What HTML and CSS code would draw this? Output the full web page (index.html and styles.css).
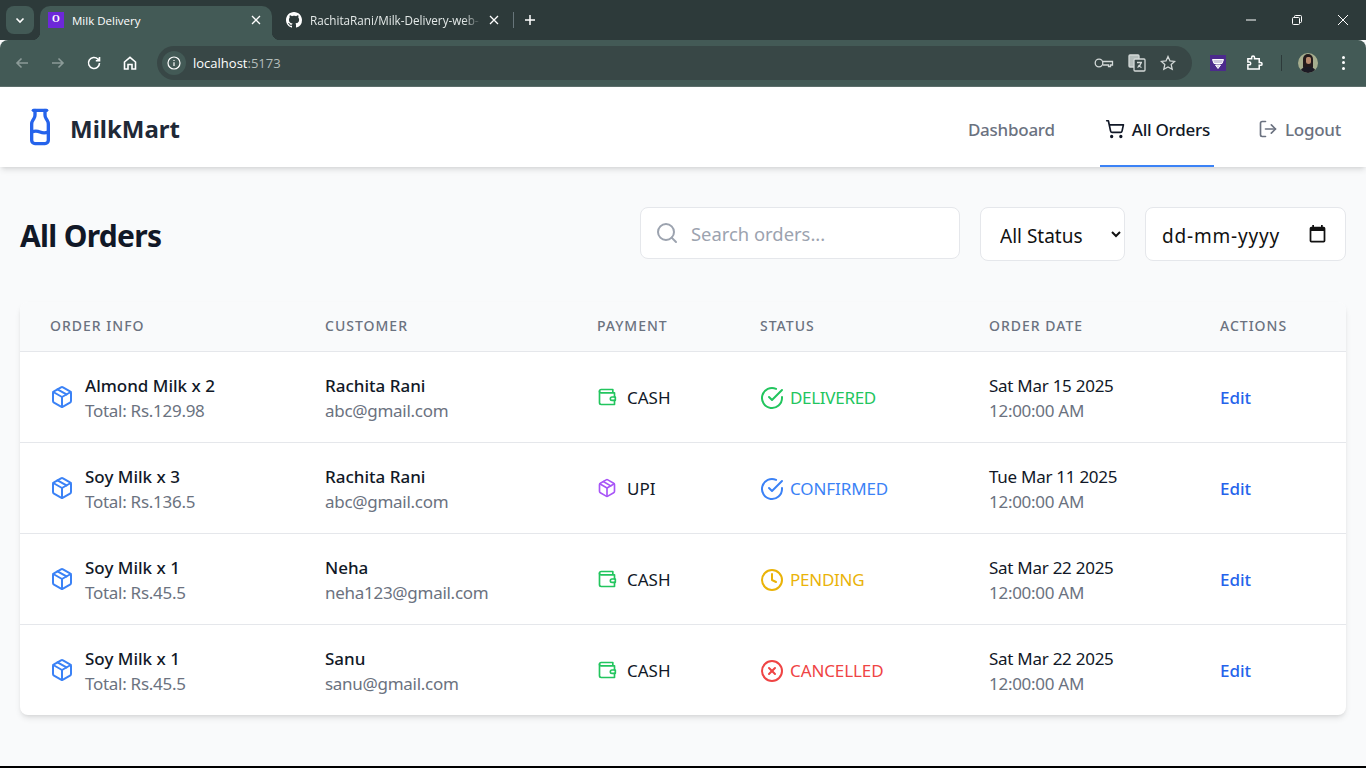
FILE: index.html
```html
<!DOCTYPE html>
<html lang="en">
<head>
  <meta charset="UTF-8" />
  <meta name="viewport" content="width=device-width, initial-scale=1.0" />
  <title>Milk Delivery</title>
  <link rel="stylesheet" href="styles.css">
</head>
<body>
  <div class="tabstrip">
    <div class="tab-search">
      <svg class="ic-chrome" width="12" height="12" viewBox="0 0 12 12"><polyline points="2.5,4.5 6,8 9.5,4.5"/></svg>
    </div>
    <div class="tab tab-active">
      <span class="favicon">O</span>
      <span class="tab-title">Milk Delivery</span>
      <svg class="tab-x" width="10" height="10" viewBox="0 0 10 10"><path d="M1 1l8 8M9 1l-8 8"/></svg>
    </div>
    <div class="tab tab-other">
      <svg class="gh" width="16" height="16" viewBox="0 0 16 16"><path d="M8 0C3.58 0 0 3.58 0 8c0 3.54 2.29 6.53 5.47 7.59.4.07.55-.17.55-.38 0-.19-.01-.82-.01-1.49-2.01.37-2.53-.49-2.69-.94-.09-.23-.48-.94-.82-1.13-.28-.15-.68-.52-.01-.53.63-.01 1.08.58 1.23.82.72 1.21 1.87.87 2.33.66.07-.52.28-.87.51-1.07-1.78-.2-3.64-.89-3.64-3.95 0-.87.31-1.59.82-2.15-.08-.2-.36-1.02.08-2.12 0 0 .67-.21 2.2.82.64-.18 1.32-.27 2-.27s1.36.09 2 .27c1.53-1.04 2.2-.82 2.2-.82.44 1.1.16 1.92.08 2.12.51.56.82 1.27.82 2.15 0 3.07-1.87 3.75-3.65 3.95.29.25.54.73.54 1.48 0 1.07-.01 1.93-.01 2.2 0 .21.15.46.55.38A8.01 8.01 0 0 0 16 8c0-4.42-3.58-8-8-8z"/></svg>
      <span class="tab-title tab-fade">RachitaRani/Milk-Delivery-web-</span>
      <svg class="tab-x" width="10" height="10" viewBox="0 0 10 10"><path d="M1 1l8 8M9 1l-8 8"/></svg>
    </div>
    <span class="tab-sep"></span>
    <svg class="tab-new" width="12" height="12" viewBox="0 0 12 12"><path d="M6 1v10M1 6h10"/></svg>
    <div class="win-controls">
      <svg width="10" height="10" viewBox="0 0 10 10"><path d="M0 5h10"/></svg>
      <svg width="10" height="10" viewBox="0 0 10 10"><rect x="0.5" y="2.5" width="7" height="7" rx="1"/><path d="M2.5 2.5V1.5a1 1 0 0 1 1-1h5a1 1 0 0 1 1 1v5a1 1 0 0 1-1 1h-1"/></svg>
      <svg width="10" height="10" viewBox="0 0 10 10"><path d="M0 0l10 10M10 0L0 10"/></svg>
    </div>
  </div>

  <div class="toolbar">
    <svg class="tool dim" width="16" height="16" viewBox="0 0 16 16"><path d="M14 8H3M7.5 3.5L3 8l4.5 4.5"/></svg>
    <svg class="tool dim" width="16" height="16" viewBox="0 0 16 16"><path d="M2 8h11M8.500 3.500L13 8l-4.500 4.500"/></svg>
    <svg class="tool" width="16" height="16" viewBox="0 0 16 16"><path d="M13.500 8a5.500 5.500 0 1 1-1.600-3.900L13.500 5.700M13.500 2v3.700H9.800"/></svg>
    <svg class="tool" width="16" height="16" viewBox="0 0 16 16"><path d="M2.500 7L8 2.300 13.500 7v7H10V9.500H6V14H2.500z"/></svg>
    <div class="omnibox">
      <span class="site-info">
        <svg width="14" height="14" viewBox="0 0 14 14"><circle cx="7" cy="7" r="6"/><path d="M7 6.300V10M7 4v1"/></svg>
      </span>
      <span class="url">localhost<span class="url-port">:5173</span></span>
      <div class="omni-icons">
        <svg width="20" height="12" viewBox="0 0 20 12"><circle cx="5" cy="6" r="3.800"/><path d="M9 4.500h9.500v3.500h-2v1.500h-2V8H9"/></svg>
        <svg width="18" height="18" viewBox="0 0 18 18"><rect class="tr-back" x="1" y="1" width="10" height="12" rx="1"/><rect class="tr-front" x="6" y="5" width="11" height="12" rx="1"/><path d="M9 8.500h5M11.500 8v1M13 9c-.5 2-1.500 3.500-3.500 4.500M10.500 11c.7 1 1.700 2 3 2.500"/></svg>
        <svg width="16" height="16" viewBox="0 0 16 16"><path d="M8 1.500l2 4.400 4.700.5-3.500 3.200 1 4.700L8 11.900l-4.200 2.400 1-4.700L1.300 6.400l4.700-.5z"/></svg>
      </div>
    </div>
    <span class="ext-icon">
      <svg width="16" height="16" viewBox="0 0 16 16"><path d="M2.500 4.500h11l-1.500 4h-8zM5.500 10h5L8 13.500z"/></svg>
    </span>
    <svg class="tool puzzle" width="17" height="17" viewBox="0 0 18 18"><path d="M2 5h4V3.500a1.500 1.500 0 0 1 3 0V5h5v4h1.500a1.500 1.500 0 0 1 0 3H14v4H2v-4.500h1.500a1.500 1.500 0 0 0 0-3H2z"/></svg>
    <span class="tool-sep"></span>
    <span class="avatar"><span class="avatar-hair"></span><span class="avatar-face"></span><span class="avatar-body"></span></span>
    <span class="kebab"><i></i><i></i><i></i></span>
  </div>

  <nav class="navbar">
    <div class="brand">
      <svg class="brand-icon" width="40" height="40" viewBox="0 0 24 24"><path d="M8 2h8"/><path d="M9 2v2.789a4 4 0 0 1-.672 2.219l-.656.984A4 4 0 0 0 7 10.212V20a2 2 0 0 0 2 2h6a2 2 0 0 0 2-2v-9.789a4 4 0 0 0-.672-2.219l-.656-.984A4 4 0 0 1 15 4.788V2"/><path d="M7 15a6.472 6.472 0 0 1 5 0 6.470 6.470 0 0 0 5 0"/></svg>
      <span class="brand-name">MilkMart</span>
    </div>
    <div class="nav-links">
      <a class="nav-link nav-dashboard">Dashboard</a>
      <a class="nav-link nav-orders">
        <svg class="lu" width="20" height="20" viewBox="0 0 24 24"><circle cx="8" cy="21" r="1"/><circle cx="19" cy="21" r="1"/><path d="M2.050 2.050h2l2.660 12.420a2 2 0 0 0 2 1.580h9.780a2 2 0 0 0 1.950-1.570l1.650-7.430H5.120"/></svg>
        All Orders
      </a>
      <a class="nav-link nav-logout">
        <svg class="lu" width="20" height="20" viewBox="0 0 24 24"><path d="M9 21H5a2 2 0 0 1-2-2V5a2 2 0 0 1 2-2h4"/><polyline points="16 17 21 12 16 7"/><line x1="21" y1="12" x2="9" y2="12"/></svg>
        Logout
      </a>
    </div>
  </nav>

  <main class="page">
    <div class="page-head">
      <h1>All Orders</h1>
      <div class="filters">
        <div class="search-box">
          <svg class="lu" width="24" height="24" viewBox="0 0 24 24"><circle cx="11" cy="11" r="8"/><line x1="21" y1="21" x2="16.650" y2="16.650"/></svg>
          <input type="text" placeholder="Search orders...">
        </div>
        <select class="status-select">
          <option>All Status</option>
        </select>
        <div class="date-box">
          <input type="text" value="dd-mm-yyyy">
          <svg width="21" height="21" viewBox="0 0 24 24"><path d="M19 3h-1V1h-2v2H8V1H6v2H5a2 2 0 0 0-2 2v14a2 2 0 0 0 2 2h14a2 2 0 0 0 2-2V5a2 2 0 0 0-2-2zm0 16H5V8h14v11z"/></svg>
        </div>
      </div>
    </div>

    <div class="card">
      <table class="orders">
        <thead>
          <tr>
            <th class="col-order">Order Info</th>
            <th class="col-customer">Customer</th>
            <th class="col-payment">Payment</th>
            <th class="col-status">Status</th>
            <th class="col-date">Order Date</th>
            <th class="col-actions">Actions</th>
          </tr>
        </thead>
        <tbody>
          <tr>
            <td><div class="order-info">
              <svg class="lu ic-pack" width="24" height="24" viewBox="0 0 24 24"><path d="m7.500 4.270 9 5.150"/><path d="M21 8a2 2 0 0 0-1-1.730l-7-4a2 2 0 0 0-2 0l-7 4A2 2 0 0 0 3 8v8a2 2 0 0 0 1 1.730l7 4a2 2 0 0 0 2 0l7-4A2 2 0 0 0 21 16Z"/><path d="m3.300 7 8.700 5 8.700-5"/><path d="M12 22V12"/></svg>
              <div><div class="strong">Almond Milk x 2</div><div class="muted">Total: Rs.129.98</div></div>
            </div></td>
            <td><div class="strong">Rachita Rani</div><div class="muted">abc@gmail.com</div></td>
            <td><div class="pay">
              <svg class="lu ic-cash" width="20" height="20" viewBox="0 0 24 24"><path d="M21 12V7H5a2 2 0 0 1 0-4h14v4"/><path d="M3 5v14a2 2 0 0 0 2 2h16v-5"/><path d="M18 12a2 2 0 0 0 0 4h4v-4Z"/></svg>
              CASH
            </div></td>
            <td><div class="status st-delivered">
              <svg class="lu" width="24" height="24" viewBox="0 0 24 24"><path d="M22 11.080V12a10 10 0 1 1-5.930-9.140"/><polyline points="22 4 12 14.010 9 11.010"/></svg>
              DELIVERED
            </div></td>
            <td><div class="date">Sat Mar 15 2025</div><div class="muted">12:00:00 AM</div></td>
            <td><a class="edit">Edit</a></td>
          </tr>
          <tr>
            <td><div class="order-info">
              <svg class="lu ic-pack" width="24" height="24" viewBox="0 0 24 24"><path d="m7.500 4.270 9 5.150"/><path d="M21 8a2 2 0 0 0-1-1.730l-7-4a2 2 0 0 0-2 0l-7 4A2 2 0 0 0 3 8v8a2 2 0 0 0 1 1.730l7 4a2 2 0 0 0 2 0l7-4A2 2 0 0 0 21 16Z"/><path d="m3.300 7 8.700 5 8.700-5"/><path d="M12 22V12"/></svg>
              <div><div class="strong">Soy Milk x 3</div><div class="muted">Total: Rs.136.5</div></div>
            </div></td>
            <td><div class="strong">Rachita Rani</div><div class="muted">abc@gmail.com</div></td>
            <td><div class="pay">
              <svg class="lu ic-upi" width="20" height="20" viewBox="0 0 24 24"><path d="m7.500 4.270 9 5.150"/><path d="M21 8a2 2 0 0 0-1-1.730l-7-4a2 2 0 0 0-2 0l-7 4A2 2 0 0 0 3 8v8a2 2 0 0 0 1 1.730l7 4a2 2 0 0 0 2 0l7-4A2 2 0 0 0 21 16Z"/><path d="m3.300 7 8.700 5 8.700-5"/><path d="M12 22V12"/></svg>
              UPI
            </div></td>
            <td><div class="status st-confirmed">
              <svg class="lu" width="24" height="24" viewBox="0 0 24 24"><path d="M22 11.080V12a10 10 0 1 1-5.930-9.140"/><polyline points="22 4 12 14.010 9 11.010"/></svg>
              CONFIRMED
            </div></td>
            <td><div class="date">Tue Mar 11 2025</div><div class="muted">12:00:00 AM</div></td>
            <td><a class="edit">Edit</a></td>
          </tr>
          <tr>
            <td><div class="order-info">
              <svg class="lu ic-pack" width="24" height="24" viewBox="0 0 24 24"><path d="m7.500 4.270 9 5.150"/><path d="M21 8a2 2 0 0 0-1-1.730l-7-4a2 2 0 0 0-2 0l-7 4A2 2 0 0 0 3 8v8a2 2 0 0 0 1 1.730l7 4a2 2 0 0 0 2 0l7-4A2 2 0 0 0 21 16Z"/><path d="m3.300 7 8.700 5 8.700-5"/><path d="M12 22V12"/></svg>
              <div><div class="strong">Soy Milk x 1</div><div class="muted">Total: Rs.45.5</div></div>
            </div></td>
            <td><div class="strong">Neha</div><div class="muted">neha123@gmail.com</div></td>
            <td><div class="pay">
              <svg class="lu ic-cash" width="20" height="20" viewBox="0 0 24 24"><path d="M21 12V7H5a2 2 0 0 1 0-4h14v4"/><path d="M3 5v14a2 2 0 0 0 2 2h16v-5"/><path d="M18 12a2 2 0 0 0 0 4h4v-4Z"/></svg>
              CASH
            </div></td>
            <td><div class="status st-pending">
              <svg class="lu" width="24" height="24" viewBox="0 0 24 24"><circle cx="12" cy="12" r="10"/><polyline points="12 6 12 12 16 14"/></svg>
              PENDING
            </div></td>
            <td><div class="date">Sat Mar 22 2025</div><div class="muted">12:00:00 AM</div></td>
            <td><a class="edit">Edit</a></td>
          </tr>
          <tr>
            <td><div class="order-info">
              <svg class="lu ic-pack" width="24" height="24" viewBox="0 0 24 24"><path d="m7.500 4.270 9 5.150"/><path d="M21 8a2 2 0 0 0-1-1.730l-7-4a2 2 0 0 0-2 0l-7 4A2 2 0 0 0 3 8v8a2 2 0 0 0 1 1.730l7 4a2 2 0 0 0 2 0l7-4A2 2 0 0 0 21 16Z"/><path d="m3.300 7 8.700 5 8.700-5"/><path d="M12 22V12"/></svg>
              <div><div class="strong">Soy Milk x 1</div><div class="muted">Total: Rs.45.5</div></div>
            </div></td>
            <td><div class="strong">Sanu</div><div class="muted">sanu@gmail.com</div></td>
            <td><div class="pay">
              <svg class="lu ic-cash" width="20" height="20" viewBox="0 0 24 24"><path d="M21 12V7H5a2 2 0 0 1 0-4h14v4"/><path d="M3 5v14a2 2 0 0 0 2 2h16v-5"/><path d="M18 12a2 2 0 0 0 0 4h4v-4Z"/></svg>
              CASH
            </div></td>
            <td><div class="status st-cancelled">
              <svg class="lu" width="24" height="24" viewBox="0 0 24 24"><circle cx="12" cy="12" r="10"/><line x1="15" y1="9" x2="9" y2="15"/><line x1="9" y1="9" x2="15" y2="15"/></svg>
              CANCELLED
            </div></td>
            <td><div class="date">Sat Mar 22 2025</div><div class="muted">12:00:00 AM</div></td>
            <td><a class="edit">Edit</a></td>
          </tr>
        </tbody>
      </table>
    </div>
  </main>
</body>
</html>
```

FILE: styles.css
```css
* {
  box-sizing: border-box;
}
html, body {
  height: 768px;
  overflow: hidden;
}
body {
  margin: 0;
  padding: 0;
  background-color: #f9fafb;
  font-family: "Noto Sans", "Open Sans", sans-serif;
  color: #111827;
  border-bottom: 2px solid #000;
}

/* browser chrome */
.tabstrip {
  display: flex;
  align-items: flex-start;
  height: 40px;
  background-color: #2d3a3a;
  padding-top: 6px;
  font-family: "Open Sans", sans-serif;
}
.tab-search {
  width: 28px;
  height: 28px;
  margin-left: 6px;
  border-radius: 8px;
  background-color: #435a56;
  display: flex;
  align-items: center;
  justify-content: center;
}
.ic-chrome {
  fill: none;
  stroke: #fff;
  stroke-width: 1.6;
}
.tab {
  display: flex;
  align-items: center;
  height: 34px;
  font-size: 11.500px;
}
.tab-active {
  position: relative;
  width: 232px;
  margin-left: 6px;
  padding: 0 11px 6px 8px;
  background-color: #435a56;
  border-radius: 10px 10px 0 0;
  color: #fff;
}
.tab-active::before,
.tab-active::after {
  content: "";
  position: absolute;
  bottom: 0;
  width: 8px;
  height: 8px;
}
.tab-active::before {
  left: -8px;
  background: radial-gradient(circle at 0 0, transparent 8px, #435a56 8.500px);
}
.tab-active::after {
  right: -8px;
  background: radial-gradient(circle at 100% 0, transparent 8px, #435a56 8.500px);
}
.tab-other {
  width: 241px;
  padding: 0 14px 6px 14px;
  color: #e3e8e7;
  font-size: 11.700px;
}
.favicon {
  width: 16px;
  height: 16px;
  margin-right: 8px;
  background-color: #6d28d9;
  color: #fff;
  font-family: "Liberation Serif", serif;
  font-size: 10px;
  font-weight: bold;
  line-height: 14px;
  text-align: center;
}
.tab-title {
  flex: 1;
  white-space: nowrap;
  overflow: hidden;
}
.tab-fade {
  -webkit-mask-image: linear-gradient(to right, #000 90%, transparent);
  mask-image: linear-gradient(to right, #000 90%, transparent);
}
.tab-x {
  fill: none;
  stroke: #fff;
  stroke-width: 1.300;
  flex-shrink: 0;
  margin-left: 8px;
}
.gh {
  fill: #fff;
  margin-right: 8px;
  flex-shrink: 0;
}
.tab-sep {
  width: 1px;
  height: 16px;
  margin-top: 6px;
  background-color: #67757a;
}
.tab-new {
  fill: none;
  stroke: #fff;
  stroke-width: 1.500;
  margin: 8px 0 0 10px;
}
.win-controls {
  display: flex;
  gap: 36px;
  margin: 9px 18px 0 auto;
}
.win-controls svg {
  fill: none;
  stroke: #fff;
  stroke-width: 1;
}
.toolbar {
  display: flex;
  align-items: center;
  height: 47px;
  padding: 0 21px 1px 14px;
  background-color: #435a56;
  border-bottom: 1px solid #5d6f6c;
  border-radius: 8px 8px 0 0;
}
.tool {
  fill: none;
  stroke: #fff;
  stroke-width: 1.600;
  margin-right: 20px;
  flex-shrink: 0;
}
.tool.dim {
  stroke: #8c9b98;
}
.omnibox {
  flex: 1;
  display: flex;
  align-items: center;
  height: 34px;
  margin: 0 18px 0 -1px;
  padding: 0 16px 0 5px;
  border-radius: 17px;
  background-color: #384746;
  font-family: "Open Sans", sans-serif;
  font-size: 13px;
}
.site-info {
  width: 24px;
  height: 24px;
  border-radius: 50%;
  background-color: #435a56;
  display: flex;
  align-items: center;
  justify-content: center;
  margin-right: 7px;
}
.site-info svg {
  fill: none;
  stroke: #fff;
  stroke-width: 1.200;
}
.url {
  color: #fff;
}
.url-port {
  color: #b4bdbb;
}
.omni-icons {
  margin-left: auto;
  display: flex;
  align-items: center;
  gap: 14px;
}
.omni-icons svg {
  fill: none;
  stroke: #d3d9d8;
  stroke-width: 1.300;
}
.omni-icons .tr-back {
  fill: #b4bdbb;
}
.omni-icons .tr-front {
  fill: #384746;
}
.ext-icon {
  width: 16px;
  height: 16px;
  margin-right: 21px;
  background-color: #4c2a8c;
  flex-shrink: 0;
}
.ext-icon svg {
  fill: #cfc8e0;
  stroke: #fff;
  stroke-width: 1;
  display: block;
}
.puzzle {
  margin-left: -1px;
  margin-right: 18px;
}
.tool-sep {
  width: 1px;
  height: 16px;
  background-color: #2d3a3a;
  margin-right: 16px;
}
.avatar {
  position: relative;
  width: 20px;
  height: 20px;
  border-radius: 50%;
  background-color: #a6ad8e;
  overflow: hidden;
  margin-right: 24px;
  flex-shrink: 0;
}
.avatar-hair {
  position: absolute;
  left: 5px;
  top: 1px;
  width: 10px;
  height: 15px;
  border-radius: 5px 5px 2px 2px;
  background-color: #241a1c;
}
.avatar-face {
  position: absolute;
  left: 7.500px;
  top: 4px;
  width: 5px;
  height: 7px;
  border-radius: 2px 2px 3px 3px;
  background-color: #b98a6e;
}
.avatar-body {
  position: absolute;
  left: 2px;
  top: 14px;
  width: 16px;
  height: 10px;
  border-radius: 6px 6px 0 0;
  background-color: #1c1a24;
}
.kebab {
  display: flex;
  flex-direction: column;
  gap: 2.500px;
}
.kebab i {
  display: block;
  width: 3px;
  height: 3px;
  border-radius: 50%;
  background-color: #fff;
}

/* app navbar */
.navbar {
  display: flex;
  align-items: center;
  justify-content: space-between;
  height: 80px;
  padding: 0 25px 0 20px;
  background-color: #fff;
  box-shadow: 0 4px 6px -1px rgba(0,0,0,0.1), 0 2px 4px -2px rgba(0,0,0,0.1);
  position: relative;
}
.brand {
  display: flex;
  align-items: center;
  gap: 10px;
}
.brand-icon {
  fill: none;
  stroke: #2563eb;
  stroke-width: 2;
  stroke-linecap: round;
  stroke-linejoin: round;
}
.brand-name {
  margin-top: 2px;
  font-size: 24px;
  font-weight: 700;
  color: #1f2937;
}
.nav-links {
  display: flex;
  align-items: stretch;
  height: 80px;
}
.nav-link {
  display: flex;
  align-items: center;
  gap: 7px;
  padding-top: 4px;
  font-size: 17px;
  letter-spacing: -0.25px;
  font-weight: 500;
  color: #6b7280;
  white-space: nowrap;
}
.nav-dashboard {
  margin-right: 45px;
}
.nav-orders {
  color: #111827;
  padding-left: 5px;
  padding-right: 4px;
  margin-right: 44px;
  box-shadow: inset 0 -2px 0 #3b82f6;
}
.lu {
  fill: none;
  stroke: currentColor;
  stroke-width: 2;
  stroke-linecap: round;
  stroke-linejoin: round;
  flex-shrink: 0;
}

/* page */
.page {
  padding: 40px 20px 0;
}
.page-head {
  display: flex;
  align-items: center;
  justify-content: space-between;
  margin-bottom: 41px;
}
h1 {
  margin: 0;
  padding-top: 2px;
  font-size: 30px;
  letter-spacing: -0.7px;
  font-weight: 700;
  color: #111827;
}
.filters {
  display: flex;
  align-items: center;
  gap: 20px;
}
.search-box {
  display: flex;
  align-items: center;
  gap: 12px;
  width: 320px;
  height: 52px;
  padding: 0 14px;
  background-color: #fff;
  border: 1px solid #e5e7eb;
  border-radius: 8px;
  color: #9ca3af;
  margin-top: -2px;
}
.search-box input {
  flex: 1;
  min-width: 0;
  padding: 0;
  border: none;
  outline: none;
  background: transparent;
  font: inherit;
  font-size: 18.400px;
}
.search-box input::placeholder {
  color: #9ca3af;
}
.status-select,
.date-box {
  height: 54px;
  background-color: #fff;
  border: 1px solid #e5e7eb;
  border-radius: 8px;
  font-family: inherit;
  font-size: 19px;
  color: #111;
}
.status-select {
  width: 145px;
  padding: 3px 0 0 15px;
}
.date-box {
  display: flex;
  align-items: center;
  width: 201px;
  padding: 0 17px 0 16px;
}
.date-box input {
  flex: 1;
  min-width: 0;
  padding: 3px 0 0;
  border: none;
  outline: none;
  background: transparent;
  font: inherit;
  letter-spacing: 0.8px;
  color: inherit;
}
.date-box svg {
  fill: #111;
  flex-shrink: 0;
}
.card {
  background-color: #fff;
  border-radius: 8px;
  overflow: hidden;
  box-shadow: 0 4px 6px -1px rgba(0,0,0,0.1), 0 2px 4px -2px rgba(0,0,0,0.1);
}
.orders {
  width: 100%;
  table-layout: fixed;
  border-collapse: collapse;
}
.orders th {
  height: 49px;
  padding: 0 30px 2px;
  background-color: #f9fafb;
  border-bottom: 1px solid #e5e7eb;
  text-align: left;
  font-size: 14px;
  font-weight: 500;
  letter-spacing: 1px;
  text-transform: uppercase;
  color: #6b7280;
}
.col-order { width: 275px; }
.col-customer { width: 272px; }
.col-payment { width: 163px; }
.col-status { width: 229px; }
.col-date { width: 231px; }
.col-actions { width: 156px; }
.orders td {
  height: 91px;
  padding: 2px 30px 0;
  border-bottom: 1px solid #e5e7eb;
  font-size: 17px;
  line-height: 25px;
  white-space: nowrap;
}
.orders tr:last-child td {
  border-bottom: none;
}
.order-info {
  display: flex;
  align-items: center;
  gap: 11px;
}
.ic-pack {
  color: #3b82f6;
  margin-top: -2px;
}
.strong {
  font-weight: 500;
  color: #111827;
}
.muted {
  color: #6b7280;
  letter-spacing: -0.28px;
}
.date {
  color: #111827;
  letter-spacing: -0.27px;
}
.pay {
  display: flex;
  align-items: center;
  gap: 10px;
}
.pay svg {
  margin-top: -2px;
}
.ic-cash {
  color: #22c55e;
}
.ic-upi {
  color: #a855f7;
}
.status {
  display: flex;
  align-items: center;
  gap: 6px;
}
.st-delivered { color: #22c55e; letter-spacing: -0.3px; }
.st-confirmed { color: #3b82f6; letter-spacing: -0.1px; }
.st-pending { color: #eab308; letter-spacing: -0.25px; }
.st-cancelled { color: #ef4444; letter-spacing: -0.1px; }
.edit {
  color: #2563eb;
  font-weight: 500;
}
```
